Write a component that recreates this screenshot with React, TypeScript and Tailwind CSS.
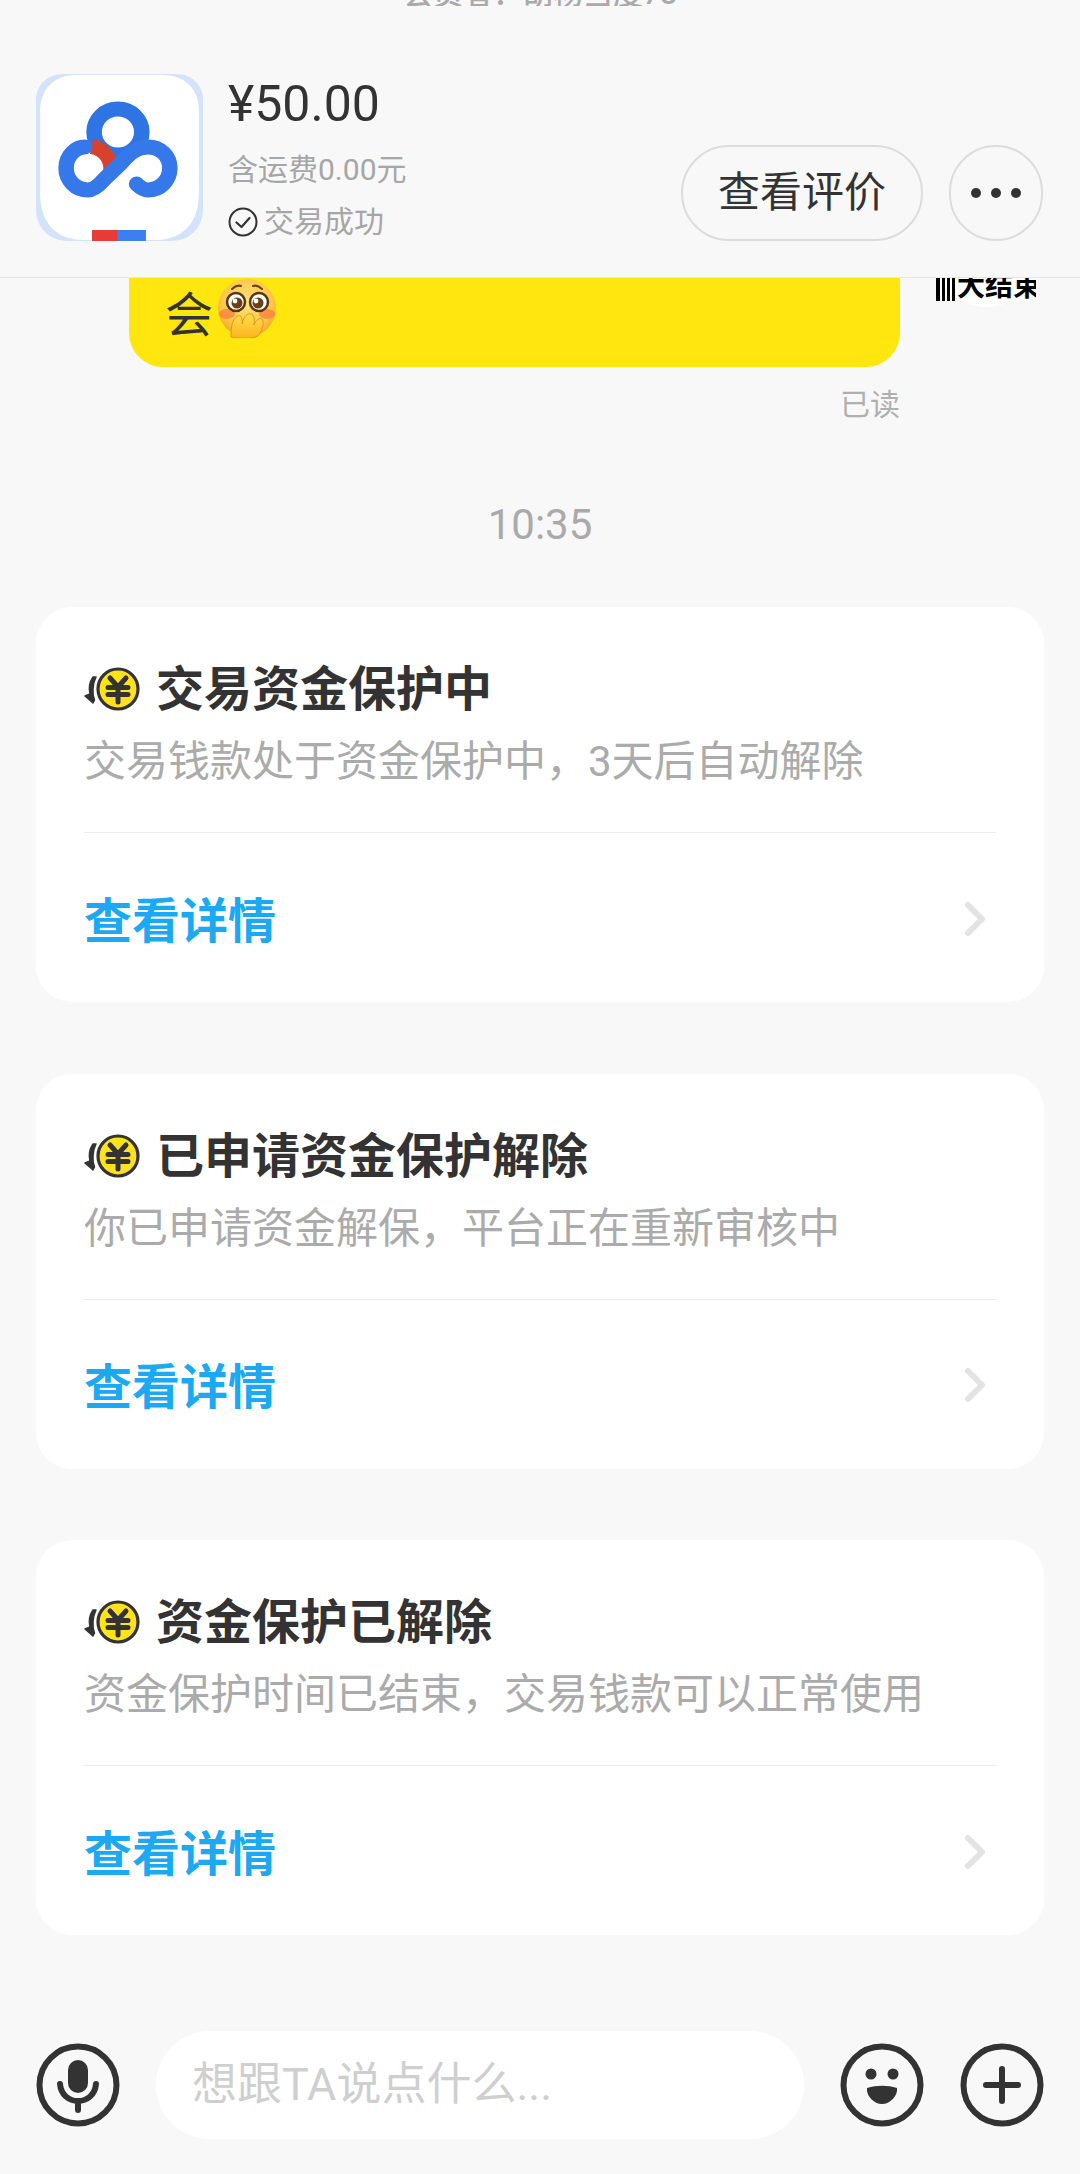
const FONT = "font-['Roboto','Noto_Sans_CJK_SC',sans-serif]";

function Logo() {
  return (
    <svg width="167" height="167" viewBox="0 0 161 167" preserveAspectRatio="none" className="shrink-0">
      <path d="M26 0H135C150 0 161 11 161 26V135C161 153 149 167 130 167H31C12 167 0 153 0 135V26C0 11 11 0 26 0Z" fill="#d3e3fa" />
      <path d="M38 1H123C143 1 157 15 157 36V120C157 150 140 166 116 166H45C21 166 4 150 4 120V36C4 15 18 1 38 1Z" fill="#ffffff" />
      <circle cx="79" cy="58" r="23" fill="none" stroke="#2f74e3" strokeWidth="15" />
      <path d="M55 65C66 67 75 76 77 85L64 99A14 14 0 0 0 52 80Z" fill="#d8412b" />
      <path
        d="M97 110C101 114 104 116 108 116C120 116 129 106 129 94C129 82 120 73 108 73C96 73 90 80 82 89L66 105C61 111 56 116 50 116C38 116 29 106 29 94C29 82 38 73 47 73"
        fill="none"
        stroke="#3478ea"
        strokeWidth="15"
        strokeLinecap="round"
      />
      <rect x="54" y="156" width="25" height="11" fill="#e93a3a" />
      <rect x="79" y="156" width="27" height="11" fill="#3c7ff0" />
    </svg>
  );
}

function CheckCircle() {
  return (
    <svg width="30" height="30" viewBox="0 0 30 30" className="shrink-0">
      <circle cx="15" cy="15" r="13.5" fill="none" stroke="#333" strokeWidth="2" />
      <path d="M8.5 15.5L13.5 20L21.5 11" fill="none" stroke="#333" strokeWidth="2.2" strokeLinecap="round" strokeLinejoin="round" />
    </svg>
  );
}

function Emoji() {
  return (
    <svg width="60" height="60" viewBox="0 0 60 60" className="ml-[4px] shrink-0">
      <defs>
        <radialGradient id="f" cx="50%" cy="40%" r="60%">
          <stop offset="0%" stopColor="#ffe27a" />
          <stop offset="70%" stopColor="#fdc84a" />
          <stop offset="100%" stopColor="#f5a62c" />
        </radialGradient>
        <linearGradient id="h" x1="0" y1="0" x2="0" y2="1">
          <stop offset="0%" stopColor="#ffe04a" />
          <stop offset="100%" stopColor="#fbb21e" />
        </linearGradient>
      </defs>
      <circle cx="30" cy="30" r="29" fill="url(#f)" />
      <ellipse cx="10" cy="36" rx="8" ry="5" fill="#f9743a" opacity="0.65" />
      <ellipse cx="50" cy="36" rx="8" ry="5" fill="#f9743a" opacity="0.65" />
      <path d="M15 11C18 8 21 7 24 8M36 8C39 7 42 8 45 11" fill="none" stroke="#6b3f12" strokeWidth="2" strokeLinecap="round" />
      <circle cx="19" cy="24" r="9" fill="#fff" stroke="#5a3511" strokeWidth="2.5" />
      <circle cx="42" cy="24" r="9" fill="#fff" stroke="#5a3511" strokeWidth="2.5" />
      <circle cx="20" cy="25" r="5.5" fill="#6b3f12" />
      <circle cx="41" cy="25" r="5.5" fill="#6b3f12" />
      <circle cx="18" cy="23" r="2.4" fill="#fff" />
      <circle cx="39" cy="23" r="2.4" fill="#fff" />
      <path d="M14 59C14 48 15 41 21 38C24 36 26 42 25 46C27 36 33 34 36 37C38 40 37 44 37 47C39 42 43 39 45 41C48 44 45 53 41 58C36 61 20 61 14 59Z" fill="url(#h)" stroke="#e8941a" strokeWidth="1" />
    </svg>
  );
}

function Avatar() {
  return (
    <div className="ml-[34px] h-[29px] w-[104px] overflow-hidden">
      <div className="-mt-[81px] flex h-[110px] w-[104px] items-start justify-center rounded-full bg-white">
        <div className="mt-[76px] flex h-[28px] w-[100px] items-end overflow-hidden rounded-b-[50px/24px]">
          <div className="flex h-[28px] w-[20px] shrink-0 gap-[2px]">
            <div className="w-[4px] bg-black" />
            <div className="w-[3px] bg-black" />
            <div className="w-[3px] bg-black" />
            <div className="w-[3px] bg-black" />
          </div>
          <span className="whitespace-nowrap pl-[1px] text-[28px] leading-[28px] font-bold text-black">大结束</span>
        </div>
      </div>
    </div>
  );
}

function Coin() {
  return (
    <svg width="58" height="48" viewBox="0 0 58 48" className="shrink-0">
      <path d="M9 11C5 17 5 24 6 28L1 30L9 37L10.5 34C8 28 8.5 18 12 11Z" fill="#333" stroke="#333" strokeWidth="1.5" strokeLinejoin="round" />
      <circle cx="34" cy="23" r="20" fill="#ffe11c" stroke="#333" strokeWidth="3.2" />
      <path d="M26 12L34 21L42 12M24 21.5H44M24 28.5H44M34 21V36" fill="none" stroke="#333" strokeWidth="5" strokeLinecap="round" strokeLinejoin="round" />
    </svg>
  );
}

function Card({ title, desc }: { title: string; desc: string }) {
  return (
    <div className="mx-[36px] mb-[71.5px] h-[395px] rounded-[36px] bg-white px-[48px] pt-[56px]">
      <div className="flex h-[54px] items-center">
        <Coin />
        <span className="ml-[14px] text-[48px] leading-[54px] font-bold text-[#333333]">{title}</span>
      </div>
      <div className="mt-[20px] h-[50px] text-[42px] leading-[50px] whitespace-nowrap text-[#ababab]">{desc}</div>
      <div className="mt-[45px] h-px bg-[#ececec]" />
      <div className="flex h-[167px] items-center justify-between pt-[10px]">
        <span className="text-[48px] leading-[60px] font-bold text-[#1aa9f2]">查看详情</span>
        <svg width="22" height="36" viewBox="0 0 22 36" className="mr-[10px] -mt-[6px]">
          <path d="M4 4L18 18L4 32" fill="none" stroke="#e3e3e3" strokeWidth="6" strokeLinecap="round" strokeLinejoin="round" />
        </svg>
      </div>
    </div>
  );
}

function MicIcon() {
  return (
    <svg width="84" height="84" viewBox="0 0 84 84" className="shrink-0">
      <circle cx="42" cy="42" r="38.5" fill="none" stroke="#333" strokeWidth="6" />
      <rect x="32" y="17" width="20" height="33" rx="10" fill="#333" />
      <path d="M24 41C25 52 33 58 42 58C51 58 59 52 60 41M42 58V67" fill="none" stroke="#333" strokeWidth="6" strokeLinecap="round" />
    </svg>
  );
}

function SmileIcon() {
  return (
    <svg width="84" height="84" viewBox="0 0 84 84" className="shrink-0">
      <circle cx="42" cy="42" r="38.5" fill="none" stroke="#333" strokeWidth="6" />
      <circle cx="31" cy="31" r="5.5" fill="#333" />
      <circle cx="53" cy="31" r="5.5" fill="#333" />
      <path d="M27 45C37 42 47 42 57 45C58 53 50 61 42 61C34 61 26 53 27 45Z" fill="#333" />
    </svg>
  );
}

function PlusIcon() {
  return (
    <svg width="84" height="84" viewBox="0 0 84 84" className="shrink-0">
      <circle cx="42" cy="42" r="38.5" fill="none" stroke="#333" strokeWidth="6" />
      <path d="M42 26V58M26 42H58" fill="none" stroke="#333" strokeWidth="6" strokeLinecap="round" />
    </svg>
  );
}

export default function App() {
  return (
    <div className={`${FONT} flex h-[2174px] w-[1080px] flex-col overflow-hidden bg-[#f8f8f8]`}>
      <div className="h-[278px] shrink-0 border-b border-[#e6e6e6]">
        <div className="flex h-[6px] items-end justify-center overflow-hidden">
          <span className="whitespace-nowrap text-[30px] leading-[24px] font-medium text-[#aaaaaa]">会员者：胡杨当度78</span>
        </div>
        <div className="mt-[68px] flex pr-[37px] pl-[36px]">
          <Logo />
          <div className="ml-[25px] flex flex-col">
            <div className="mt-[2px] h-[56px] text-[50px] leading-[56px] text-[#333333]">¥50.00</div>
            <div className="mt-[18px] h-[40px] text-[30px] leading-[40px] whitespace-nowrap text-[#a6a6a6]">含运费0.00元</div>
            <div className="mt-[12px] flex h-[40px] items-center text-[#a6a6a6]">
              <CheckCircle />
              <span className="ml-[6px] text-[30px] leading-[40px] whitespace-nowrap">交易成功</span>
            </div>
          </div>
          <div className="mt-[71px] ml-auto flex gap-[26px]">
            <div className="flex h-[96px] w-[242px] items-center justify-center rounded-full border-2 border-[#dcdcdc] text-[42px] leading-none text-[#333333]">
              查看评价
            </div>
            <div className="flex h-[96px] w-[94px] items-center justify-center gap-[10px] rounded-full border-2 border-[#dcdcdc]">
              <div className="h-[10px] w-[10px] rounded-full bg-[#333333]" />
              <div className="h-[10px] w-[10px] rounded-full bg-[#333333]" />
              <div className="h-[10px] w-[10px] rounded-full bg-[#333333]" />
            </div>
          </div>
        </div>
      </div>

      <div className="flex pl-[129px]">
        <div className="flex h-[89px] w-[771px] items-start rounded-b-[34px] bg-[#ffe60f] pl-[36px]">
          <span className="mt-[8px] text-[48px] leading-[60px] text-[#333333]">会</span>
          <Emoji />
        </div>
        <Avatar />
      </div>

      <div className="mt-[23px] w-[900px] text-right text-[30px] leading-[30px] text-[#b0b0b0]">已读</div>
      <div className="mt-[80px] text-center text-[42px] leading-[50px] text-[#aaaaaa]">10:35</div>

      <div className="mt-[57px]">
        <Card title="交易资金保护中" desc="交易钱款处于资金保护中，3天后自动解除" />
        <Card title="已申请资金保护解除" desc="你已申请资金解保，平台正在重新审核中" />
        <Card title="资金保护已解除" desc="资金保护时间已结束，交易钱款可以正常使用" />
      </div>

      <div className="mt-[24px] flex items-center px-[36px]">
        <MicIcon />
        <div className="ml-[36px] flex h-[108px] w-[648px] items-center rounded-full bg-white pl-[36px] text-[45px] leading-none text-[#cfcfcf]">
          想跟TA说点什么...
        </div>
        <div className="ml-auto flex gap-[36px]">
          <SmileIcon />
          <PlusIcon />
        </div>
      </div>
    </div>
  );
}
